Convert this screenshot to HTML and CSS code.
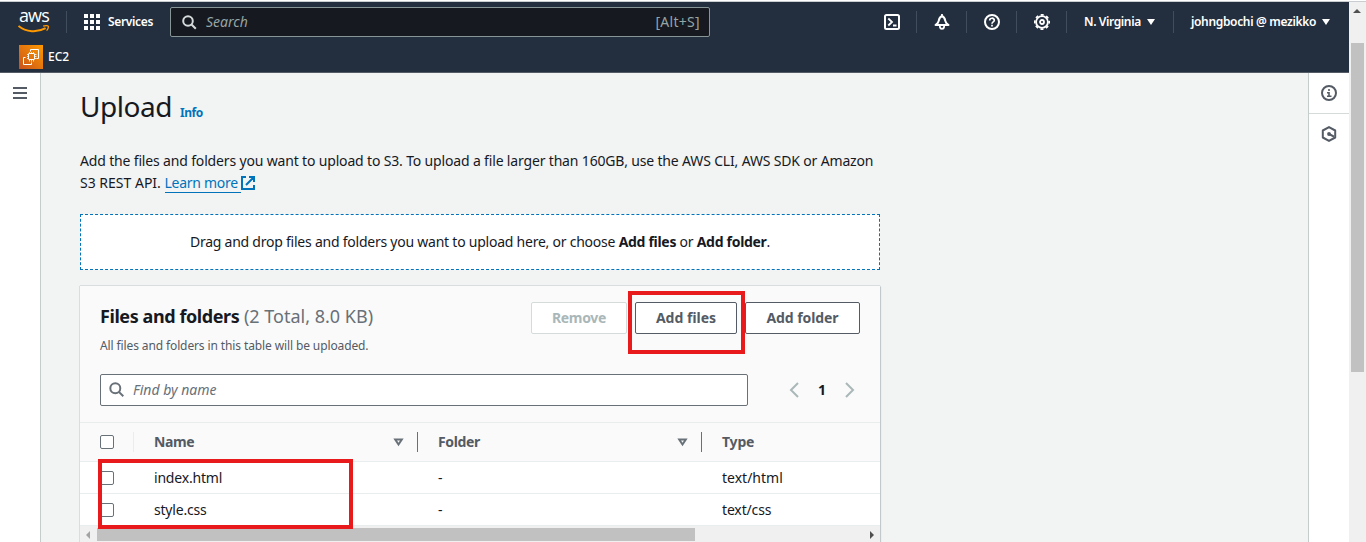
FILE: index.html
```html
<!DOCTYPE html>
<html lang="en">
<head>
<meta charset="utf-8">
<title>Upload</title>
<link rel="stylesheet" href="styles.css">
</head>
<body>
<div class="screen">
  <div class="app">
    <header class="top">
      <div class="nav">
        <div class="aws"><span class="aws-word">aws</span>
          <svg class="smile" width="32" height="8" viewBox="0 0 32 8"><path d="M.5 1C8 7.300 19.500 7.800 27.600 3.200" fill="none" stroke="#f90" stroke-width="1.900"/><path d="M25.200 1.200c2.400-.8 4.900-.8 5.200.2.100 1.400-.6 3-1.800 4.200" fill="none" stroke="#f90" stroke-width="1.300"/></svg>
        </div>
        <i class="sep sep-logo"></i>
        <div class="services"><svg width="16" height="16" viewBox="0 0 16 16" fill="#fff"><path d="M0 0h4v4H0zM6 0h4v4H6zM12 0h4v4h-4zM0 6h4v4H0zM6 6h4v4H6zM12 6h4v4h-4zM0 12h4v4H0zM6 12h4v4H6zM12 12h4v4h-4z"/></svg><span class="t-services">Services</span></div>
        <div class="search"><svg width="15" height="15" viewBox="0 0 15 15" fill="none" stroke="#d5dbdb" stroke-width="2"><circle cx="6" cy="6" r="4.800"/><path d="M9.500 9.500l4.300 4.300"/></svg><span class="t-search">Search</span><span class="t-alt">[Alt+S]</span></div>
        <div class="tools">
          <div class="tool"><svg width="16" height="16" viewBox="0 0 16 16" fill="none" stroke="#fff" stroke-width="2"><rect x="1" y="1" width="14" height="14" rx="1.500"/><path d="M4.300 4.500L8 8l-3.700 3.500M9 11.500h3.500" stroke-width="1.800"/></svg></div>
          <div class="tool"><svg width="16" height="16" viewBox="0 0 16 16" fill="none" stroke="#fff" stroke-width="2" stroke-linejoin="round"><path d="M8 2.200C6 2.600 5.100 4.500 4.700 6.800 4.400 8.800 3.200 9.800 1.500 11h13C12.800 9.800 11.600 8.800 11.300 6.800 10.900 4.500 10 2.600 8 2.200z"/><path d="M5.900 12v1c.4 2.500 3.800 2.500 4.200 0v-1M8 0v2" stroke-width="1.800"/></svg></div>
          <div class="tool"><svg width="16" height="16" viewBox="0 0 16 16" fill="none" stroke="#fff" stroke-width="2"><circle cx="8" cy="8" r="7"/><path d="M5.700 6.500c0-3 4.600-3 4.600-.2C10.300 8 8 7.800 8 9.700M8 10.800v1.700" stroke-width="1.700"/></svg></div>
          <div class="tool"><svg width="16" height="16" viewBox="0 0 16 16" fill="none" stroke="#fff"><circle cx="8" cy="8" r="5.900" stroke-width="1.800"/><circle cx="8" cy="8" r="7.200" stroke-width="1.700" stroke-dasharray="3 2.655" stroke-dashoffset="1.500"/><circle cx="8" cy="8" r="2" stroke-width="1.800"/></svg></div>
          <div class="menu region"><span class="t-region">N. Virginia</span><i class="caret"></i></div>
          <div class="menu account"><span class="t-account">johngbochi @ mezikko</span><i class="caret"></i></div>
        </div>
      </div>
      <div class="favorites"><svg width="24" height="24" viewBox="0 0 24 24"><defs><linearGradient id="ec2" x1="0" y1="1" x2="1" y2="0"><stop stop-color="#c8511b"/><stop offset="1" stop-color="#f90"/></linearGradient></defs><path fill="url(#ec2)" d="M0 0h24v24H0z"/><g fill="none" stroke="#fff"><path d="M11.500 6.500v-2h8v9h-2M6.500 12.500h-2v7h8v-2"/><rect x="9.500" y="8.500" width="6" height="6" rx=".5"/><path d="M10.500 7v1.500M12.500 7v1.500M14.500 7v1.500M10.500 15v1.500M12.500 15v1.500M14.500 15v1.500M8 9.500h1.500M8 11.500h1.500M8 13.500h1.500M16 9.500h1.500M16 11.500h1.500M16 13.500h1.500" stroke-width=".8"/></g></svg><span class="t-ec2">EC2</span></div>
    </header>
    <div class="body">
      <aside class="left"><i></i><i></i><i></i></aside>
      <main>
        <div class="title"><h1>Upload</h1><a>Info</a></div>
        <p class="intro"><span class="t-in1">Add the files and folders you want to upload to S3. To upload a file larger than 160GB, use the AWS CLI, AWS SDK or Amazon</span><br><span class="t-in2">S3 REST API. </span><a class="learn">Learn more </a><svg class="ext" width="14" height="14" viewBox="0 0 14 14" fill="none" stroke="#0073bb" stroke-width="2"><path d="M5 1H1v12h12V9M8 1h5v5M13 1L5 9"/></svg></p>
        <div class="drop"><span class="t-drop">Drag and drop files and folders you want to upload here, or choose <b>Add files</b> or <b>Add folder</b>.</span></div>
        <section class="panel">
          <div class="panel-head">
            <div class="head-row">
              <div><h2><b class="t-ff">Files and folders</b> <span class="t-total">(2 Total, 8.0 KB)</span></h2><p class="desc">All files and folders in this table will be uploaded.</p></div>
              <div class="buttons"><button class="btn remove" disabled>Remove</button><button class="btn add-files">Add files<span class="mark mark-add"></span></button><button class="btn add-folder">Add folder</button></div>
            </div>
            <div class="filter-row">
              <div class="filter"><svg width="16" height="16" viewBox="0 0 16 16" fill="none" stroke="#687078" stroke-width="2"><circle cx="6.300" cy="6.300" r="5"/><path d="M9.900 9.900l4.400 4.400"/></svg><span class="t-find">Find by name</span></div>
              <div class="pager"><svg width="10" height="16" viewBox="0 0 10 16" fill="none" stroke="#aab7b8" stroke-width="2"><path d="M9 1L2 8l7 7"/></svg><b>1</b><svg width="10" height="16" viewBox="0 0 10 16" fill="none" stroke="#aab7b8" stroke-width="2"><path d="M1 1l7 7-7 7"/></svg></div>
            </div>
          </div>
          <div class="grid head"><div class="cell"><i class="box"></i></div><div class="cell"><b class="t-name">Name</b><svg width="11" height="9" viewBox="0 0 11 9"><path d="M2.200 1.500h6.600L5.500 6.500z" fill="none" stroke="#687078" stroke-width="2"/></svg></div><div class="cell"><b class="t-folder">Folder</b><svg width="11" height="9" viewBox="0 0 11 9"><path d="M2.200 1.500h6.600L5.500 6.500z" fill="none" stroke="#687078" stroke-width="2"/></svg></div><div class="cell"><b class="t-type">Type</b></div></div>
          <div class="rows">
            <div class="grid row"><div class="cell"><i class="box"></i></div><div class="cell"><span class="t-index">index.html</span></div><div class="cell">-</div><div class="cell"><span class="t-html">text/html</span></div></div>
            <div class="grid row"><div class="cell"><i class="box"></i></div><div class="cell"><span class="t-style">style.css</span></div><div class="cell">-</div><div class="cell"><span class="t-css">text/css</span></div></div>
            <span class="mark mark-rows"></span>
          </div>
          <div class="hscroll"><i class="arr-l"></i><i class="thumb-h"></i><i class="arr-r"></i></div>
        </section>
      </main>
      <aside class="right">
        <div><svg width="16" height="16" viewBox="0 0 16 16" fill="none" stroke="#545b64" stroke-width="2"><circle cx="8" cy="8" r="7"/><path d="M8 4v2M6 7.700h2V11M6 11.300h4.500" stroke-width="1.600"/></svg></div>
        <div><svg width="16" height="16" viewBox="0 0 16 16" fill="none" stroke="#545b64" stroke-width="2"><path d="M8 1.100l6.200 3.400v7L8 14.900l-6.200-3.400v-7z" stroke-linejoin="round"/><circle cx="8" cy="8" r="1.900" fill="#545b64" stroke="none"/><path d="M8 8l5 2.700"/></svg></div>
      </aside>
    </div>
  </div>
  <div class="vscroll"><i class="arr-u"></i><i class="thumb-v"></i></div>
</div>
</body>
</html>
```
FILE: styles.css
```css
* { box-sizing: border-box; }
body { margin: 0; font: 14px/22px "Noto Sans", "Open Sans", sans-serif; color: #16191f; overflow: hidden; }
span, b, a, h1 { white-space: nowrap; }
svg { display: block; flex: none; }
i { display: block; flex: none; }
.screen { display: flex; width: 1366px; height: 542px; border-top: 1px solid #fff; box-shadow: inset 0 1px #c9cdd0; padding-top: 1px; }
.app { width: 1349px; display: flex; flex-direction: column; }

.top { height: 71px; background: #232f3e; border-bottom: 1px solid #545b64; color: #fff; flex: none; }
.nav { display: flex; align-items: center; height: 40px; }
.aws { width: 32px; margin-left: 18px; height: 24px; }
.aws-word { display: block; height: 15px; font: 500 18px/11px "Open Sans", sans-serif; letter-spacing: -.9px; padding-left: 1px; }
.sep { width: 1px; height: 22px; background: #414d5c; }
.sep-logo { margin-left: 16px; }
.services { display: flex; align-items: center; gap: 8px; margin-left: 17px; width: 86px; font-size: 12px; font-weight: 600; }
.t-services { letter-spacing: -.35px; }
.search { display: flex; align-items: center; width: 540px; height: 30px; border: 1px solid #879596; border-radius: 2px; background: #16191f; padding: 0 9px 0 11px; color: #95a5a6; }
.t-search { margin-left: 9px; font-style: italic; }
.t-alt { margin-left: auto; letter-spacing: .3px; }
.tools { display: flex; margin-left: 157px; align-items: center; font-size: 12px; font-weight: 600; }
.tool { width: 50px; height: 22px; display: flex; align-items: center; justify-content: center; border-right: 1px solid #414d5c; }
.menu { display: flex; align-items: center; height: 22px; gap: 6px; padding-left: 17px; }
.region { width: 107px; border-right: 1px solid #414d5c; }
.t-region { letter-spacing: -.38px; }
.t-account { letter-spacing: -.34px; }
.caret { border: 4px solid transparent; border-top: 6px solid #fff; border-bottom: 0; }
.favorites { display: flex; align-items: center; gap: 5px; padding: 3px 0 0 19px; font-size: 12px; font-weight: 500; }

.body { flex: 1; display: flex; min-height: 0; }
.left { width: 41px; background: #fff; border-right: 1px solid #c5cccc; padding: 14px 13px; display: grid; gap: 3px; align-content: start; }
.left i { height: 2px; background: #545b64; }
main { width: 1267px; background: #f2f3f3; padding: 19px 0 0 39px; }
.title { display: flex; align-items: baseline; height: 28px; gap: 8px; }
h1 { margin: 0; font: 400 28px/28px "Noto Sans", sans-serif; letter-spacing: -.45px; }
.title a { font-size: 12px; line-height: 16px; font-weight: 700; color: #0073bb; letter-spacing: -.5px; }
.intro { margin: 30px 0 20px; height: 44px; }
.t-in1 { letter-spacing: -.162px; }
.learn { color: #0073bb; border-bottom: 1px solid #0073bb; white-space: pre; letter-spacing: -.28px; }
.ext { display: inline-block; vertical-align: -2px; }
.drop { width: 800px; height: 56px; border: 1px dashed #0073bb; background: #fff; display: flex; align-items: center; justify-content: center; }
.t-drop { letter-spacing: -.235px; }
.t-drop b { letter-spacing: -.3px; }
.panel { width: 800px; margin-top: 16px; height: 256px; background: #fff; box-shadow: 0 0 1px #687078, 1px 1px 1px #d5dbdb; }
.panel-head { height: 136px; background: #fafafa; padding: 16px 20px; }
.head-row { display: flex; justify-content: space-between; height: 72px; }
h2 { margin: 3px 0 0; font: 400 18px/22px "Noto Sans", sans-serif; color: #687078; }
h2 b { color: #16191f; letter-spacing: -.42px; }
.desc { margin: 11px 0 0; font-size: 12px; line-height: 16px; color: #545b64; letter-spacing: -.115px; }
.buttons { display: flex; gap: 8px; }
.btn { position: relative; height: 32px; border: 1px solid #545b64; border-radius: 2px; background: #fff; color: #545b64; font: 700 14px/22px "Noto Sans", sans-serif; padding: 0; white-space: nowrap; }
.remove { width: 96px; color: #aab7b8; border-color: #d5dbdb; letter-spacing: -.3px; }
.add-files { width: 102px; }
.add-folder { width: 115px; letter-spacing: -.08px; }
.mark { position: absolute; border: 4px solid #e81a1c; z-index: 2; }
.mark-add { left: -8px; top: -12px; width: 117px; height: 63px; }
.filter-row { display: flex; align-items: center; justify-content: space-between; }
.filter { width: 648px; height: 32px; border: 1px solid #687078; border-radius: 2px; background: #fff; display: flex; align-items: center; gap: 8px; padding-left: 8px; font-style: italic; color: #687078; }
.pager { display: flex; align-items: center; justify-content: space-between; width: 66px; margin-right: 5px; }
.grid { display: grid; grid-template-columns: 54px 284px 284px 178px; align-items: center; }
.cell { padding-left: 20px; display: flex; align-items: center; }
.head { height: 40px; background: #fafafa; border: solid #eaeded; border-width: 1px 0; color: #545b64; }
.head .cell { height: 20px; }
.head .cell svg { margin: 0 13px 0 auto; }
.head .cell:nth-child(2), .head .cell:nth-child(3) { border-right: 1px solid #687078; }
.head .cell:first-child { border-right: 1px solid #eaeded; }
.t-name, .t-type { letter-spacing: -.6px; }
.t-name, .t-folder { letter-spacing: -.35px; }
.t-type { letter-spacing: -.2px; }
.box { width: 14px; height: 14px; border: 1px solid #687078; border-radius: 2px; background: #fff; }
.rows { position: relative; }
.row { height: 32px; border-bottom: 1px solid #eaeded; }
.t-index, .t-style { letter-spacing: -.2px; }
.t-css { letter-spacing: -.15px; }
.mark-rows { left: 18px; top: -3px; width: 255px; height: 70px; }
.hscroll { height: 16px; background: #f0f0f0; display: flex; align-items: center; padding: 1px 6px 0; }
.thumb-h { width: 598px; height: 13px; background: #c1c1c1; margin: 0 auto 0 7px; }
.arr-l { border: 4px solid transparent; border-right-color: #a3a3a3; border-left: 0; }
.arr-r { border: 4px solid transparent; border-left-color: #505050; border-right: 0; }
.right { width: 41px; background: #fff; border-left: 1px solid #c5cccc; }
.right div { height: 41px; display: flex; align-items: center; justify-content: center; }
.right div + div { height: 40px; }
.right div:first-child { border-bottom: 1px solid #d5dbdb; }
.vscroll { width: 17px; background: #f0f0f0; padding: 7px 2px 0; }
.arr-u { margin-left: 2px; width: 8px; border: 4px solid transparent; border-bottom-color: #505050; border-top: 0; }
.thumb-v { width: 13px; height: 329px; margin-top: 30px; background: #c1c1c1; }
```
